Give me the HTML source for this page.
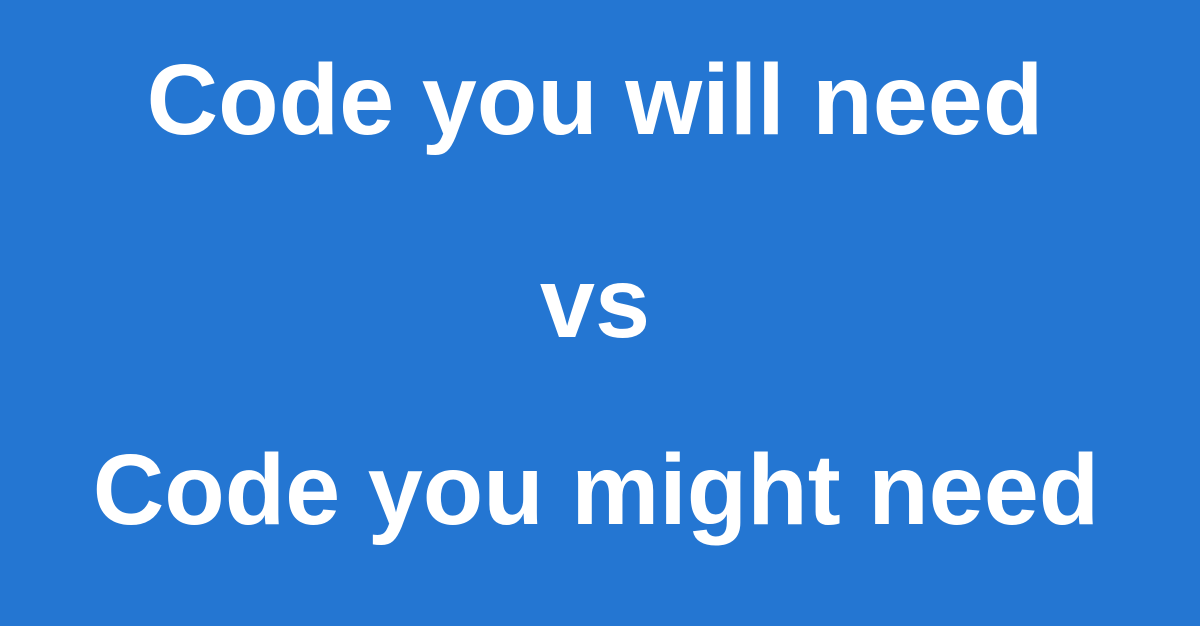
<!DOCTYPE html>
<html><head><style>
html,body{margin:0;padding:0}
body{width:1200px;height:626px;background:#2476d2;overflow:hidden;position:relative;font-family:"Liberation Sans",sans-serif;font-weight:bold;color:#fff}
.t{position:absolute;left:0;width:1200px;text-align:center;white-space:nowrap;transform:scaleX(0.99)}
</style></head><body>
<div class="t" style="top:40px;font-size:100px;line-height:120px;left:-5px">Code you will need</div>
<div class="t" style="top:243px;font-size:100px;line-height:120px;left:-5px">vs</div>
<div class="t" style="top:430px;font-size:100px;line-height:120px;left:-4px">Code you might need</div>
</body></html>
